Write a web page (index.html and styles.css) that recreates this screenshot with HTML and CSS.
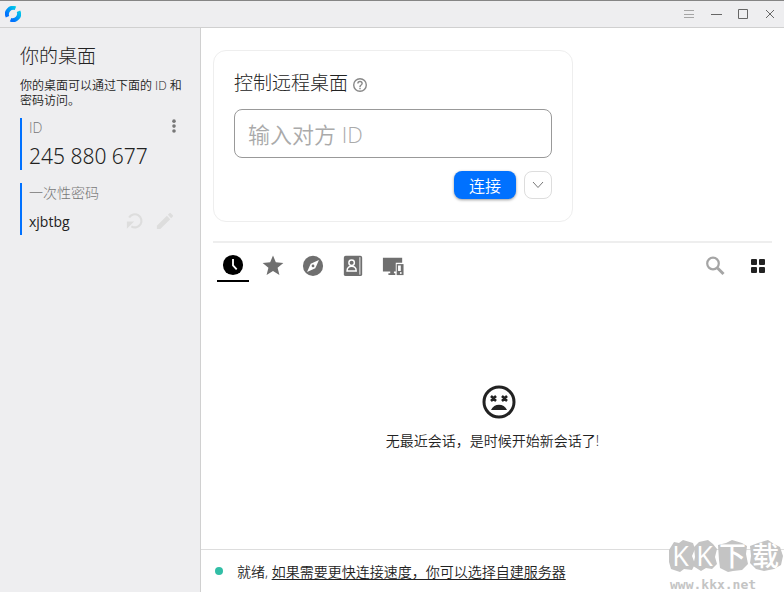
FILE: index.html
```html
<!DOCTYPE html>
<html lang="zh-CN">
<head>
    <meta charset="UTF-8">
    <meta name="viewport" content="width=device-width, initial-scale=1.0">
    <title>RustDesk</title>
    <link rel="stylesheet" href="styles.css">
</head>
<body>
    <header class="titlebar">
        <svg class="logo" viewBox="0 0 16 16" aria-hidden="true">
            <defs>
                <linearGradient id="logoFill" x1="0" y1="1" x2="1" y2="0">
                    <stop offset="0.2" stop-color="#0071ff"/>
                    <stop offset="0.9" stop-color="#00c8e8"/>
                </linearGradient>
            </defs>
            <g fill="url(#logoFill)">
                <path d="M11.2 .6A8 8 0 0 0 .8 11.500L4.200 9.900A4.500 4.500 0 0 1 9.700 4Z"/>
                <path d="M4.800 15.400A8 8 0 0 0 15.200 4.500L11.800 6.100A4.500 4.500 0 0 1 6.300 12Z"/>
            </g>
        </svg>
        <div class="window-buttons">
            <button class="window-button menu" aria-label="菜单">
                <svg viewBox="0 0 12 12"><path d="M1 2.500h10M1 6.500h10M1 9.500h10"/></svg>
            </button>
            <button class="window-button" aria-label="最小化">
                <svg viewBox="0 0 12 12"><path d="M1 6.500h11"/></svg>
            </button>
            <button class="window-button" aria-label="最大化">
                <svg viewBox="0 0 12 12"><path d="M1.500 1.500h9v9h-9z"/></svg>
            </button>
            <button class="window-button" aria-label="关闭">
                <svg viewBox="0 0 12 12"><path d="M2 2l8 8M10 2l-8 8"/></svg>
            </button>
        </div>
    </header>

    <div class="layout">
        <aside class="sidebar">
            <h1>你的桌面</h1>
            <p class="intro">你的桌面可以通过下面的 ID 和密码访问。</p>

            <section class="field">
                <div class="field-row">
                    <span class="field-label">ID</span>
                    <button class="icon-button more" aria-label="更多">
                        <svg viewBox="0 0 20 20"><circle cx="10" cy="3.500" r="2"/><circle cx="10" cy="9" r="2"/><circle cx="10" cy="14.500" r="2"/></svg>
                    </button>
                </div>
                <div class="field-row">
                    <span class="desk-id">245 880 677</span>
                </div>
            </section>

            <section class="field">
                <div class="field-row">
                    <span class="field-label">一次性密码</span>
                </div>
                <div class="field-row">
                    <span class="password">xjbtbg</span>
                    <div class="field-actions">
                        <button class="icon-button" aria-label="刷新密码">
                            <svg viewBox="0 0 20 20"><path d="M3.500 6.200A7.300 7.300 0 1 1 6 16" fill="none" stroke="#dddddd" stroke-width="2.400"/><path d="M1 10.500h8L1 18.500z"/></svg>
                        </button>
                        <button class="icon-button" aria-label="修改密码">
                            <svg viewBox="2 2 20 20"><path d="M3 17.250V21h3.750L17.810 9.940l-3.750-3.750L3 17.250zM20.710 7.040a1 1 0 0 0 0-1.410l-2.340-2.340a1 1 0 0 0-1.410 0l-1.830 1.830 3.750 3.750 1.830-1.830z"/></svg>
                        </button>
                    </div>
                </div>
            </section>
        </aside>

        <main class="main">
            <div class="content">
                <form class="connect-card">
                    <div class="card-title">
                        <label for="remoteId">控制远程桌面</label>
                        <svg class="help" viewBox="2 2 20 20" aria-hidden="true"><path d="M11 18h2v-2h-2v2zm1-16a10 10 0 1 0 0 20 10 10 0 0 0 0-20zm0 18a8 8 0 1 1 0-16 8 8 0 0 1 0 16zm0-14a4 4 0 0 0-4 4h2a2 2 0 1 1 4 0c0 2-3 1.750-3 5h2c0-2.250 3-2.500 3-5a4 4 0 0 0-4-4z"/></svg>
                    </div>
                    <input class="remote-id" id="remoteId" type="text" placeholder="输入对方 ID">
                    <div class="card-actions">
                        <button class="connect" type="button">连接</button>
                        <button class="dropdown" type="button" aria-label="更多连接方式">
                            <svg viewBox="0 0 12 12"><path d="M1 3l5 5.500 5-5.500"/></svg>
                        </button>
                    </div>
                </form>

                <nav class="tabs">
                    <button class="tab active" aria-label="最近会话">
                        <svg viewBox="0 0 24 24"><circle cx="12" cy="12" r="11"/><path d="M12 5.500v7l4 4.200" fill="none" stroke="#ffffff" stroke-width="2"/></svg>
                    </button>
                    <button class="tab" aria-label="收藏">
                        <svg viewBox="0 0 24 24"><path d="M12 1.500l3.100 7.600 8.200.6-6.300 5.300 2 8L12 18.600 5 23l2-8L.7 9.700l8.200-.6z"/></svg>
                    </button>
                    <button class="tab" aria-label="已发现">
                        <svg viewBox="0 0 24 24"><circle cx="12" cy="13" r="11"/><path d="M18.500 6.500l-4 9-9 4 4-9z" fill="#ffffff"/><circle cx="12" cy="13" r="1.500"/></svg>
                    </button>
                    <button class="tab" aria-label="地址簿">
                        <svg viewBox="0 0 24 24"><rect x="2" y="2" width="20" height="22" rx="2"/><path d="M19.500 3.500v19" stroke="#ffffff" stroke-width="1"/><circle cx="10.500" cy="9.500" r="3" fill="none" stroke="#ffffff" stroke-width="1.600"/><path d="M5.500 18.500c0-7 10-7 10 0z" fill="none" stroke="#ffffff" stroke-width="1.600"/></svg>
                    </button>
                    <button class="tab" aria-label="可访问的设备">
                        <svg viewBox="0 0 24 24"><path d="M1 4h21v5.500h-7V19H1zM9 19h4v2h1.500v2H7v-2h2z"/><path d="M16 11h7.500v12H16z"/><path d="M17.500 12.500h3v6h-3z" fill="#ffffff"/><circle cx="20.500" cy="20.700" r="1" fill="#ffffff"/></svg>
                    </button>
                    <div class="tab-tools">
                        <button class="tool" aria-label="搜索">
                            <svg viewBox="0 0 20 20"><circle cx="8" cy="7.500" r="5.800" fill="none" stroke="#a5a5a5" stroke-width="2.200"/><path d="M12.500 12l6 6" stroke="#a5a5a5" stroke-width="3"/></svg>
                        </button>
                        <button class="tool" aria-label="视图">
                            <svg viewBox="0 0 20 20"><rect x="3" y="3" width="6" height="6" rx="1"/><rect x="11" y="3" width="6" height="6" rx="1"/><rect x="3" y="11" width="6" height="6" rx="1"/><rect x="11" y="11" width="6" height="6" rx="1"/></svg>
                        </button>
                    </div>
                </nav>

                <div class="empty">
                    <svg viewBox="0 0 34 34" aria-hidden="true">
                        <circle cx="17" cy="17" r="15" fill="none" stroke="#222222" stroke-width="3"/>
                        <path d="M9 11l5 5M14 11l-5 5M20 11l5 5M25 11l-5 5" stroke="#222222" stroke-width="2.500"/>
                        <path d="M9 25c3-7 13-7 16 0z"/>
                    </svg>
                    <p>无最近会话，是时候开始新会话了!</p>
                </div>
            </div>

            <footer class="status">
                <span class="status-dot"></span>
                <span>就绪, <a href="#">如果需要更快连接速度，你可以选择自建服务器</a></span>
            </footer>
        </main>
    </div>

    <div class="watermark">
        <svg viewBox="0 0 116 34" aria-hidden="true">
            <path d="M1 11l5-8 5 1 4-3 10 3 2 6-3 7 3 8-3 6-8-1-4 3-9-3-2-7z"/>
            <path d="M26 8l5-5 9-2 5 4 4 5-2 8 2 7-5 5-6-1-5 3-8-5 2-9z"/>
            <path d="M50 6l8-2 6-3 10 3 5 3-1 8 2 10-6 6-9 1-5 1-8-4-1-8z"/>
            <path d="M82 7l8-3 10-3 6 4 6 3 3 9-2 9-7 4-10 2-8-2-6-6 1-7z"/>
        </svg>
        <div class="watermark-name"><span>K</span><span>K</span><span>下</span><span>载</span></div>
        <span class="watermark-url">www.kkx.net</span>
    </div>
</body>
</html>
```
FILE: styles.css
```css
* {
    box-sizing: border-box;
}

body {
    display: flex;
    flex-direction: column;
    min-height: 100vh;
    margin: 0;
    background: #ffffff;
    color: #222222;
    font-family: 'Open Sans', 'Noto Sans CJK SC', sans-serif;
    font-size: 14px;
    font-weight: 350;
}

button {
    display: flex;
    align-items: center;
    justify-content: center;
    padding: 0;
    border: none;
    background: none;
    font: inherit;
    cursor: pointer;
}

/* Title bar */
.titlebar {
    display: flex;
    align-items: center;
    justify-content: space-between;
    height: 28px;
    padding: 0 8px 0 5px;
    border-top: 1px solid #858585;
    border-bottom: 1px solid #d0d0d0;
    background: #eeeef0;
}

.logo {
    width: 16px;
    height: 16px;
}

.window-buttons {
    display: flex;
    gap: 15px;
}

.window-button svg {
    width: 12px;
    height: 12px;
    fill: none;
    stroke: #666666;
}

.window-button.menu svg {
    stroke: #a5a5a5;
}

.layout {
    display: flex;
    flex: 1;
}

/* Sidebar */
.sidebar {
    width: 201px;
    padding: 16px 14px 0 20px;
    border-right: 1px solid #d0d0d0;
    background: #eeeef0;
}

h1 {
    margin: 0;
    font-size: 19px;
    font-weight: 300;
    line-height: 24px;
}

.intro {
    margin: 10px 0;
    font-size: 12px;
    line-height: 15px;
}

.field {
    height: 52px;
    margin-bottom: 13px;
    padding: 0 3px 0 7px;
    border-left: 2px solid #0071ff;
}

.field-row {
    display: flex;
    align-items: center;
    justify-content: space-between;
    height: 18px;
}

.field-row + .field-row {
    height: 40px;
}

.field-label {
    color: #777777;
    font-weight: 300;
}

.desk-id {
    font-family: 'Noto Sans', sans-serif;
    font-size: 21px;
}

.password {
    font-size: 14px;
    font-weight: 400;
}

.field-actions {
    display: flex;
    gap: 12px;
    margin-right: 9px;
}

.icon-button svg {
    width: 18px;
    height: 18px;
    fill: #dddddd;
}

.icon-button.more svg {
    fill: #777777;
}

/* Main area */
.main {
    display: flex;
    flex: 1;
    flex-direction: column;
}

.content {
    display: flex;
    flex: 1;
    flex-direction: column;
    padding: 22px 12px 0;
}

.connect-card {
    width: 100%;
    max-width: 360px;
    padding: 20px;
    border: 1px solid #eeeeee;
    border-radius: 13px;
}

.card-title {
    display: flex;
    align-items: center;
    gap: 5px;
    font-size: 19px;
    font-weight: 300;
    line-height: 24px;
}

.help {
    width: 14px;
    height: 14px;
    margin-top: 4px;
    fill: #888888;
}

.remote-id {
    width: 100%;
    height: 49px;
    margin: 14px 0 13px;
    padding: 0 13px;
    border: 1px solid #999999;
    border-radius: 8px;
    color: #222222;
    font: inherit;
    font-size: 22px;
}

.remote-id::placeholder {
    color: #aaaaaa;
}

.card-actions {
    display: flex;
    justify-content: flex-end;
    gap: 8px;
    padding-bottom: 2px;
}

.connect {
    width: 62px;
    height: 28px;
    border-radius: 8px;
    background: #0071ff;
    box-shadow: 0 1px 3px rgba(0, 0, 0, 0.4);
    color: #ffffff;
    font-size: 16px;
}

.dropdown {
    width: 28px;
    height: 28px;
    border: 1px solid #dddddd;
    border-radius: 8px;
}

.dropdown svg {
    width: 12px;
    height: 12px;
    fill: none;
    stroke: #777777;
}

/* Tabs */
.tabs {
    display: flex;
    gap: 8px;
    margin-top: 19px;
    padding: 6px 4px 0;
    border-top: 2px solid #eeeeee;
}

.tab {
    width: 32px;
    height: 33px;
    border-bottom: 2px solid transparent;
}

.tab svg {
    width: 22px;
    height: 22px;
    fill: #6f6f6f;
}

.tab.active {
    border-bottom-color: #000000;
}

.tab.active svg {
    fill: #000000;
}

.tab-tools {
    display: flex;
    align-items: center;
    gap: 23px;
    margin-left: auto;
}

.tool svg {
    width: 20px;
    height: 20px;
    fill: #222222;
}

/* Empty session list */
.empty {
    display: flex;
    flex: 1;
    flex-direction: column;
    align-items: center;
    justify-content: center;
    gap: 12px;
    padding-top: 4px;
}

.empty svg {
    width: 34px;
    height: 34px;
    margin-right: -12px;
    fill: #222222;
}

.empty p {
    margin: 0;
    line-height: 20px;
}

/* Status bar */
.status {
    display: flex;
    align-items: center;
    gap: 14px;
    height: 43px;
    padding: 0 14px;
    border-top: 1px solid #dddddd;
}

.status-dot {
    width: 8px;
    height: 8px;
    border-radius: 50%;
    background: #32bea6;
}

.status a {
    color: inherit;
    text-underline-offset: 2px;
}

/* Watermark over the lower right corner */
.watermark {
    position: absolute;
    right: 0;
    bottom: 0;
    width: 116px;
    height: 53px;
    color: #c4c4c4;
    pointer-events: none;
}

.watermark svg {
    display: block;
    width: 116px;
    height: 34px;
    fill: #c4c4c4;
}

.watermark-name {
    position: absolute;
    top: 0;
    left: 0;
    display: grid;
    grid-template-columns: 25px 23px 33px 33px;
    justify-items: center;
    color: #ffffff;
    font-size: 27px;
    font-weight: 500;
    line-height: 34px;
}

.watermark-url {
    display: block;
    padding-left: 2px;
    font-family: 'DejaVu Sans Mono', monospace;
    font-size: 13px;
    font-weight: 700;
    line-height: 24px;
}
```
